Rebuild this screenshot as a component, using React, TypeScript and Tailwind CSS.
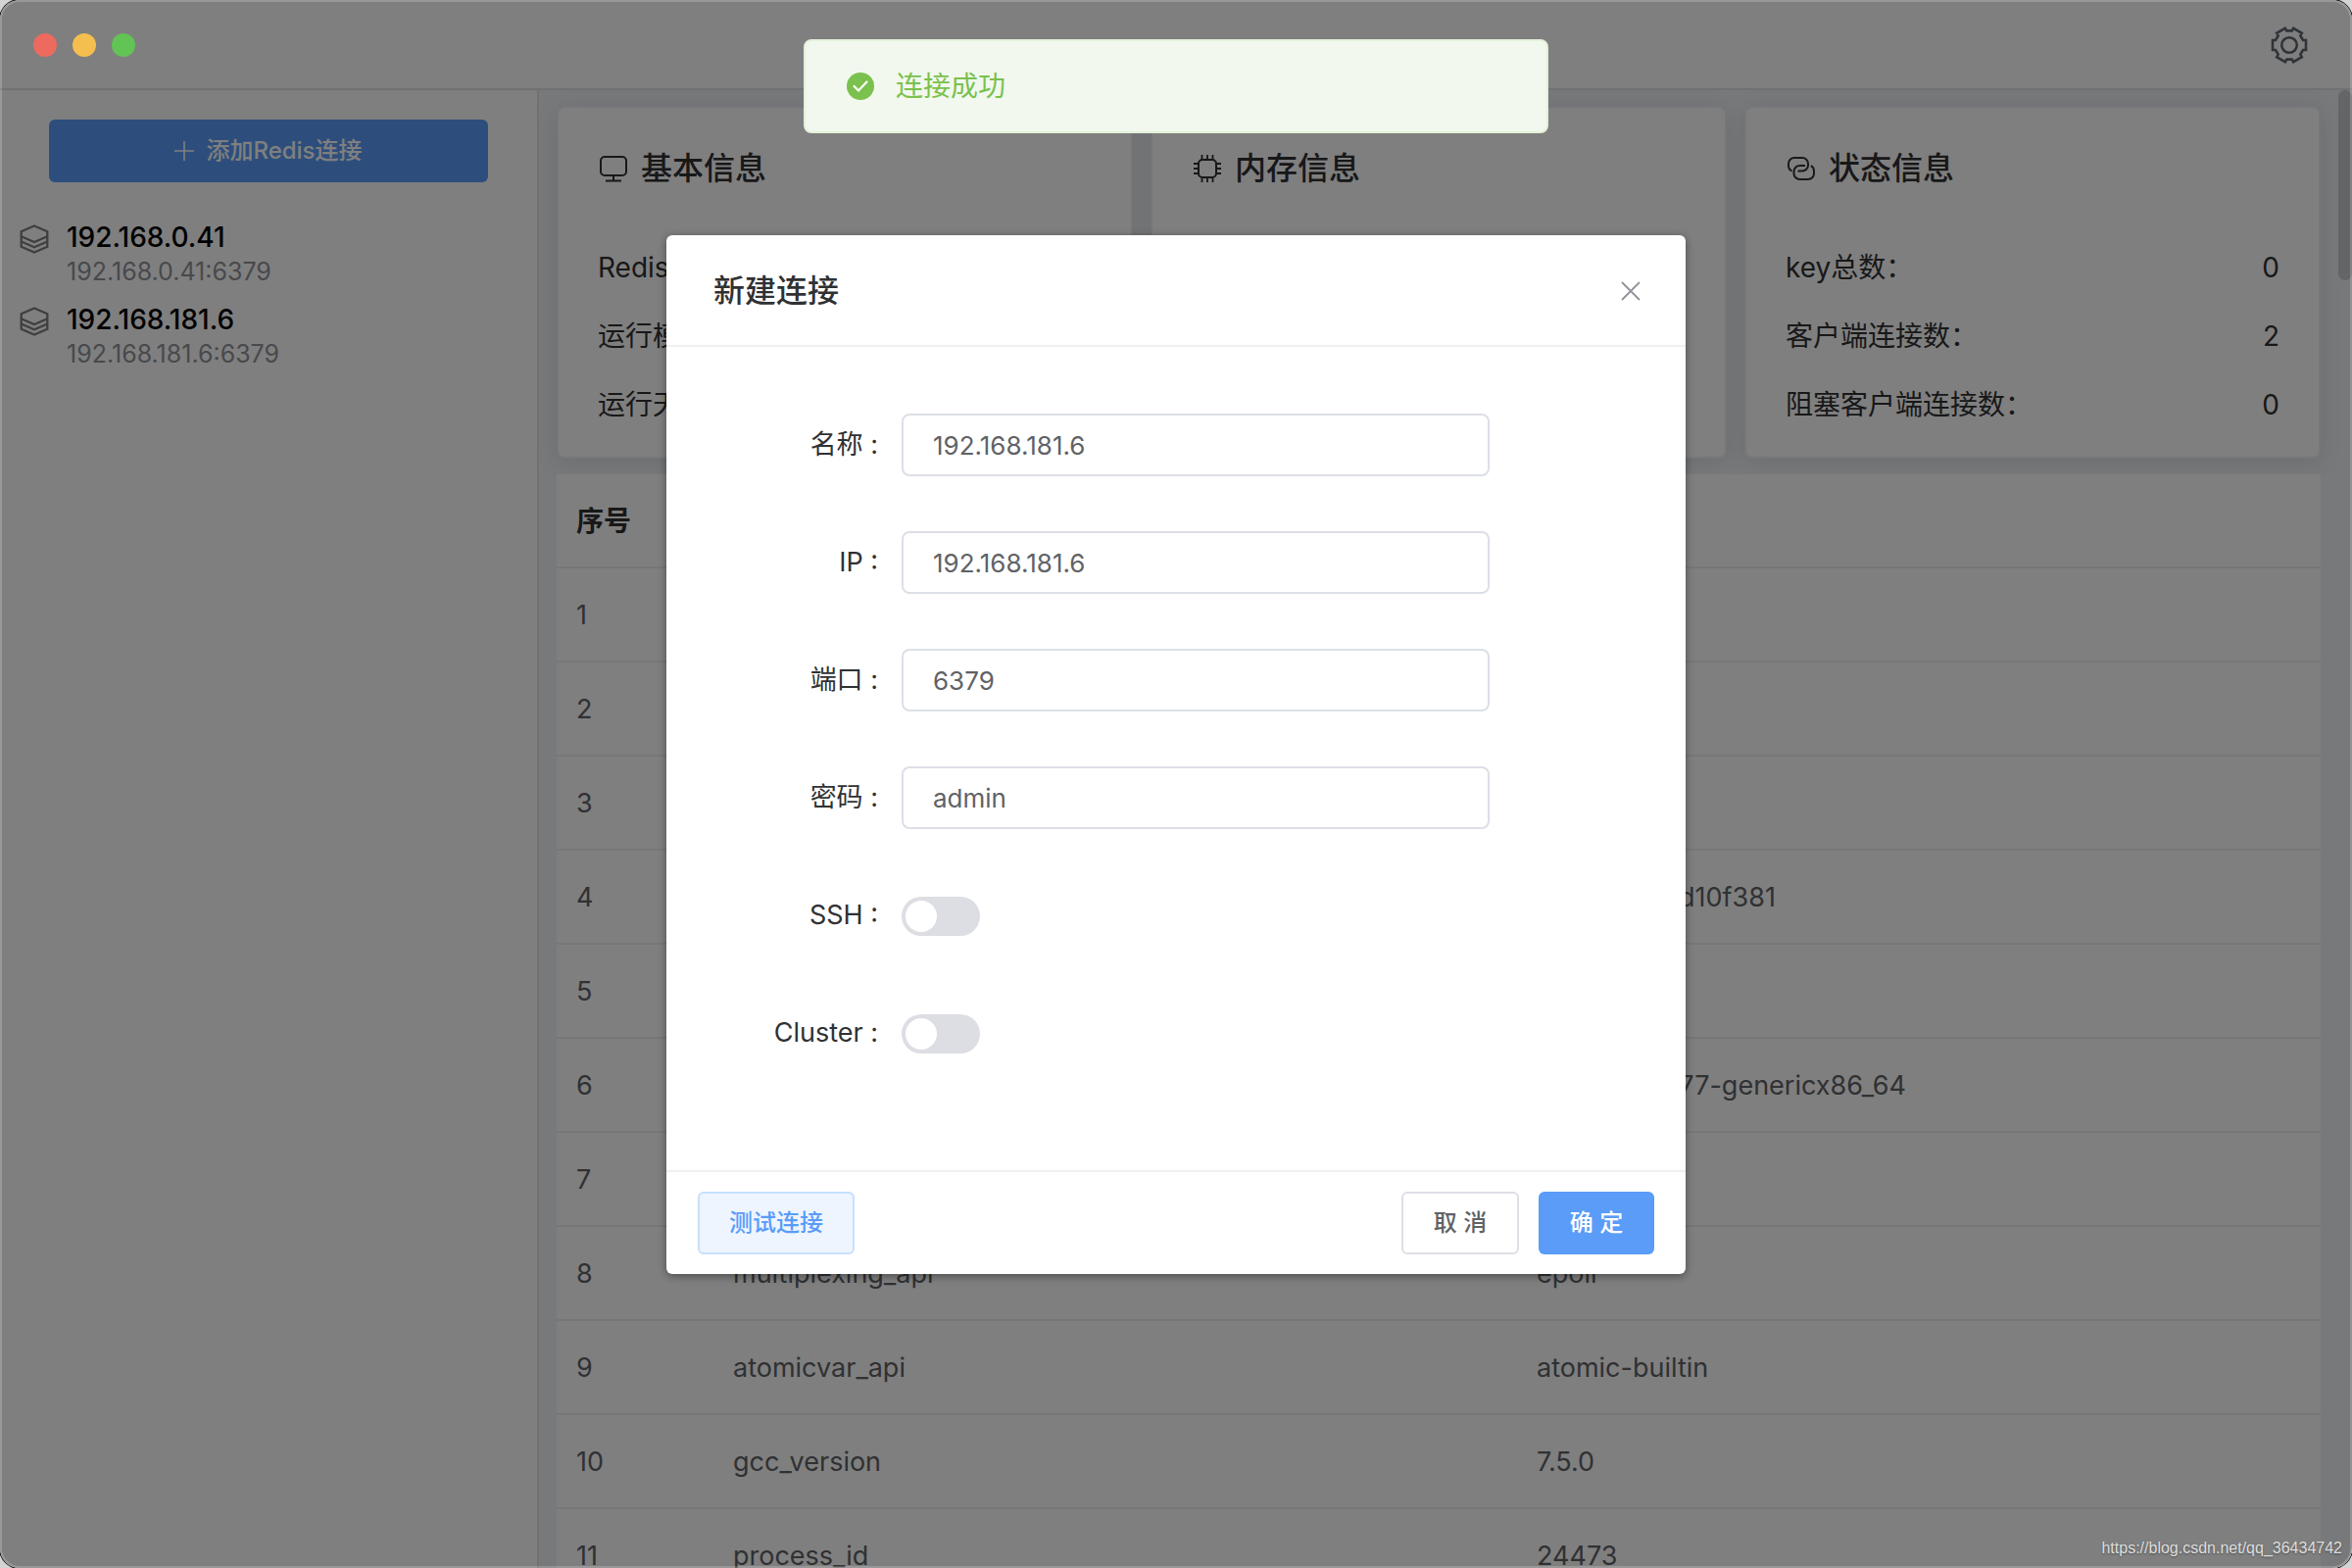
import { useState } from 'react';
import type { ReactNode } from 'react';

const connections = [
    { name: '192.168.0.41', address: '192.168.0.41:6379' },
    { name: '192.168.181.6', address: '192.168.181.6:6379' },
];

const serverInfo = [
    { key: 'redis_version', value: '5.0.7' },
    { key: 'redis_git_sha1', value: '00000000' },
    { key: 'redis_git_dirty', value: '0' },
    { key: 'redis_build_id', value: '636cde3b7d10f381' },
    { key: 'redis_mode', value: 'standalone' },
    { key: 'os', value: 'Linux4.15.1-77-genericx86_64' },
    { key: 'arch_bits', value: '64' },
    { key: 'multiplexing_api', value: 'epoll' },
    { key: 'atomicvar_api', value: 'atomic-builtin' },
    { key: 'gcc_version', value: '7.5.0' },
    { key: 'process_id', value: '24473' },
];

function GearIcon() {
    return (
        <svg className="w-10 h-10" viewBox="0 0 40 40" fill="none" stroke="currentColor" strokeWidth="2.6">
            <path d="M34 15H37V25H34L31.3 29.6L32.8 32.2L24.2 37.2L22.7 34.6H17.3L15.8 37.2L7.2 32.2L8.7 29.6L6 25H3V15H6L8.7 10.4L7.2 7.8L15.8 2.8L17.3 5.4H22.7L24.2 2.8L32.8 7.8L31.3 10.4Z" />
            <circle cx="20" cy="20" r="7.8" />
        </svg>
    );
}

function StackIcon() {
    return (
        <svg className="w-[30px] h-[30px] shrink-0" viewBox="0 0 30 30" fill="none" stroke="currentColor" strokeWidth="2.3">
            <path d="M15 1.5L28.3 7.3V22.7L15 28.5L1.7 22.7V7.3Z" />
            <path d="M1.7 12.3L15 18.1L28.3 12.3M1.7 17.5L15 23.3L28.3 17.5" />
        </svg>
    );
}

function MonitorIcon() {
    return (
        <svg className="w-[30px] h-7" viewBox="-2 0 30 28" fill="none" stroke="currentColor" strokeWidth="2">
            <rect x="1" y="2" width="26" height="19" rx="4" />
            <path d="M14 21V26.5M6 26.5H22" />
        </svg>
    );
}

function ChipIcon() {
    return (
        <svg className="w-[30px] h-7" viewBox="-2 0 30 28" fill="none" stroke="currentColor" strokeWidth="2">
            <rect x="5" y="5" width="18" height="18" rx="4" />
            <path d="M8.5 0V5M14 0V5M19.5 0V5M8.5 23V28M14 23V28M19.5 23V28" strokeWidth="1.8" />
            <path d="M0 9H5M0 14H5M0 19H5M23 9H28M23 14H28M23 19H28" strokeWidth="1.8" />
        </svg>
    );
}

function LinkIcon() {
    return (
        <svg className="w-[30px] h-7" viewBox="-2 -2 30 28" fill="none" stroke="currentColor" strokeWidth="2">
            <path d="M4.5 14.5C2.2 13.5 1 11.5 1 9V7A6 6 0 0 1 7 1H15A6 6 0 0 1 21 7V8.5A6 6 0 0 1 15 14.5H10.5" />
            <path d="M18 9H12.5A6 6 0 0 0 6.5 15V17A6 6 0 0 0 12.5 23H21A6 6 0 0 0 27 17V14.5C27 12 26 10.2 23.8 9.2" />
        </svg>
    );
}

const cards = [
    {
        title: '基本信息',
        icon: <MonitorIcon />,
        rows: [['Redis版本：', '5.0.7'], ['运行模式：', 'standalone'], ['运行天数：', '1']],
    },
    {
        title: '内存信息',
        icon: <ChipIcon />,
        rows: [['已用内存：', '854.89K'], ['内存峰值：', '873.54K'], ['系统内存：', '3.84G']],
    },
    {
        title: '状态信息',
        icon: <LinkIcon />,
        rows: [['key总数：', '0'], ['客户端连接数：', '2'], ['阻塞客户端连接数：', '0']],
    },
];

function InfoCard({ title, icon, rows }: { title: string; icon: ReactNode; rows: string[][] }) {
    return (
        <section className="h-[360px] px-10 pt-[38px] rounded-lg bg-white border-2 border-[#ebeef5] text-[#303133] shadow-[0_4px_24px_rgba(0,0,0,0.1)]">
            <h2 className="h-12 flex items-center gap-3.5 text-[32px] font-medium">
                {icon}
                {title}
            </h2>
            <dl className="mt-[42px] text-[28px]">
                {rows.map(([label, value]) => (
                    <div key={label} className="h-[70px] flex items-center justify-between">
                        <dt>{label}</dt>
                        <dd>{value}</dd>
                    </div>
                ))}
            </dl>
        </section>
    );
}

function FormRow({ id, label, children }: { id: string; label: string; children: ReactNode }) {
    return (
        <div className="h-16 flex items-center">
            <label htmlFor={id} className="w-60 pr-6 text-right text-[27px] text-[#303133]">
                {label} :
            </label>
            {children}
        </div>
    );
}

const inputClass =
    'w-[600px] h-16 px-[30px] rounded-lg border-2 border-[#dcdfe6] bg-white text-[26px] text-[#606266] outline-none';
const switchClass =
    'appearance-none w-20 h-10 mt-0.5 rounded-full bg-[#dddee4] p-1 cursor-pointer before:block before:w-8 before:h-8 before:rounded-full before:bg-white checked:bg-[#5a9cf8] checked:before:translate-x-10';

function ConnectionDialog() {
    const [form, setForm] = useState({
        name: '192.168.181.6',
        ip: '192.168.181.6',
        port: '6379',
        password: 'admin',
    });
    const [ssh, setSsh] = useState(false);
    const [cluster, setCluster] = useState(false);

    const fields: { id: keyof typeof form; label: string }[] = [
        { id: 'name', label: '名称' },
        { id: 'ip', label: 'IP' },
        { id: 'port', label: '端口' },
        { id: 'password', label: '密码' },
    ];

    return (
        <div
            role="dialog"
            aria-labelledby="dialog-title"
            className="w-[1040px] mt-60 mx-auto rounded-md bg-white shadow-[0_2px_8px_rgba(0,0,0,0.4)]"
        >
            <header className="h-[114px] pt-0.5 pl-12 pr-[46px] flex items-center justify-between border-b-2 border-[#f0f0f0]">
                <h2 id="dialog-title" className="text-[32px] font-medium text-[#303133]">
                    新建连接
                </h2>
                <button type="button" aria-label="关闭" className="text-[#909399]">
                    <svg className="w-5 h-5" viewBox="0 0 20 20" fill="none" stroke="currentColor" strokeWidth="1.8">
                        <path d="M1 1L19 19M19 1L1 19" />
                    </svg>
                </button>
            </header>

            <form className="pt-[68px] pb-[108px] flex flex-col gap-14">
                {fields.map(({ id, label }) => (
                    <FormRow key={id} id={id} label={label}>
                        <input
                            id={id}
                            type="text"
                            className={inputClass}
                            value={form[id]}
                            onChange={(e) => setForm({ ...form, [id]: e.target.value })}
                        />
                    </FormRow>
                ))}
                <FormRow id="ssh" label="SSH">
                    <input id="ssh" type="checkbox" className={switchClass} checked={ssh} onChange={(e) => setSsh(e.target.checked)} />
                </FormRow>
                <FormRow id="cluster" label="Cluster">
                    <input id="cluster" type="checkbox" className={switchClass} checked={cluster} onChange={(e) => setCluster(e.target.checked)} />
                </FormRow>
            </form>

            <footer className="px-8 py-5 flex items-center gap-5 border-t-2 border-[#f0f0f0] text-2xl font-medium">
                <button type="button" className="w-40 h-16 mr-auto rounded-md border-2 border-[#c8dffc] bg-[#eef5fe] text-[#5a9cf8]">
                    测试连接
                </button>
                <button type="button" className="w-[120px] h-16 rounded-md border-2 border-[#dcdfe6] bg-white text-[#606266]">
                    取 消
                </button>
                <button type="button" className="w-[118px] h-16 rounded-md bg-[#5a9cf8] text-white">
                    确 定
                </button>
            </footer>
        </div>
    );
}

export default function App() {
    return (
        <div lang="zh-CN" className="h-screen bg-[#d4d4d4] font-['Inter','Noto_Sans_CJK_SC',sans-serif]">
            <div className="relative h-full flex flex-col overflow-hidden rounded-[20px] bg-white shadow-[0_0_0_1px_#111]">
                <header className="h-[92px] shrink-0 pt-0.5 pl-[34px] pr-11 flex items-center justify-between border-b-2 border-[#e2e3e5]">
                    <div className="relative z-30 flex gap-4">
                        <span className="w-6 h-6 rounded-full bg-[#ed6a5e]" />
                        <span className="w-6 h-6 rounded-full bg-[#f5bf4f]" />
                        <span className="w-6 h-6 rounded-full bg-[#61c454]" />
                    </div>
                    <button type="button" aria-label="设置" className="text-[#606870]">
                        <GearIcon />
                    </button>
                </header>

                <div className="flex-1 min-h-0 flex">
                    <aside className="w-[550px] shrink-0 pt-[30px] border-r-2 border-[#e2e3e5]">
                        <button
                            type="button"
                            className="w-[448px] h-16 mx-[50px] flex items-center justify-center gap-3 rounded-md bg-[#5a9cf8] text-2xl font-medium text-white"
                        >
                            <svg className="w-5 h-5" viewBox="0 0 20 20" fill="none" stroke="currentColor" strokeWidth="1.6">
                                <path d="M10 0V20M0 10H20" />
                            </svg>
                            添加Redis连接
                        </button>
                        <ul className="mt-9">
                            {connections.map((item) => (
                                <li key={item.name} className="h-[84px] pl-5 flex gap-[18px]">
                                    <span className="mt-[7px] text-[#7d7e82]">
                                        <StackIcon />
                                    </span>
                                    <div>
                                        <p className="text-[28px] leading-10 font-medium text-black">{item.name}</p>
                                        <p className="text-[25px] leading-[30px] text-[#909399]">{item.address}</p>
                                    </div>
                                </li>
                            ))}
                        </ul>
                    </aside>

                    <main className="relative flex-1 min-w-0 overflow-hidden pt-4 pl-[18px] pr-8 bg-[#f0f2f5]">
                        <div className="grid grid-cols-3 gap-[18px]">
                            {cards.map((card) => (
                                <InfoCard key={card.title} {...card} />
                            ))}
                        </div>

                        <table className="relative w-full mt-4 table-fixed border-separate border-spacing-0 bg-white text-left text-[27px] text-[#606266]">
                            <thead className="text-[28px] text-[#303133]">
                                <tr className="h-24">
                                    <th className="w-40 pl-5 pt-0.5 border-b-2 border-[#ebeef5] font-semibold">序号</th>
                                    <th className="pl-5 pt-0.5 border-b-2 border-[#ebeef5] font-semibold">名称</th>
                                    <th className="pl-5 pt-0.5 border-b-2 border-[#ebeef5] font-semibold">值</th>
                                </tr>
                            </thead>
                            <tbody>
                                {serverInfo.map((row, index) => (
                                    <tr key={row.key} className="h-24">
                                        <td className="pl-5 pt-0.5 border-b-2 border-[#ebeef5]">{index + 1}</td>
                                        <td className="pl-5 pt-0.5 border-b-2 border-[#ebeef5]">{row.key}</td>
                                        <td className="pl-5 pt-0.5 border-b-2 border-[#ebeef5]">{row.value}</td>
                                    </tr>
                                ))}
                            </tbody>
                        </table>

                        {/* scrollbar thumb */}
                        <div className="absolute top-0 right-0 w-3.5 h-[194px] rounded-lg bg-[#c9cacc]" />
                    </main>
                </div>

                <div className="absolute inset-0 z-20 rounded-[20px] bg-black/50">
                    <ConnectionDialog />
                </div>

                <div
                    role="alert"
                    className="absolute z-40 top-10 left-1/2 -translate-x-1/2 w-[760px] h-24 pl-[42px] flex items-center gap-[22px] rounded-lg border-2 border-[#e3f1d9] bg-[#f2f8ed] text-[28px] text-[#7ac14d]"
                >
                    <svg className="w-7 h-7" viewBox="0 0 28 28" fill="none">
                        <circle cx="14" cy="14" r="14" fill="currentColor" />
                        <path d="M7.5 14L12 18.5L20.5 9.5" stroke="#fff" strokeWidth="2.2" strokeLinecap="round" />
                    </svg>
                    连接成功
                </div>

                <a
                    href="https://blog.csdn.net/qq_36434742"
                    className="absolute z-40 right-2.5 bottom-2 font-['Liberation_Sans',sans-serif] text-base text-[#dedede] [text-shadow:0_1px_2px_rgba(0,0,0,0.4)]"
                >
                    https://blog.csdn.net/qq_36434742
                </a>

                {/* light rim of the window frame */}
                <div className="absolute inset-0 z-40 pointer-events-none rounded-[20px] border-2 border-white/20" />
            </div>
        </div>
    );
}
